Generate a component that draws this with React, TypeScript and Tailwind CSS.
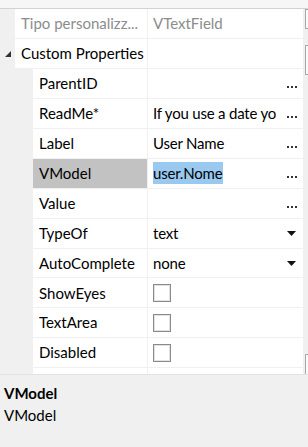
import React from 'react';

type Prop = {
  name: string;
  value?: string;
  kind: 'text' | 'dots' | 'select' | 'check' | 'none';
  selected?: boolean;
};

const props: Prop[] = [
  { name: 'ParentID', kind: 'dots' },
  { name: 'ReadMe*', value: 'If you use a date yo', kind: 'dots' },
  { name: 'Label', value: 'User Name', kind: 'dots' },
  { name: 'VModel', value: 'user.Nome', kind: 'dots', selected: true },
  { name: 'Value', kind: 'dots' },
  { name: 'TypeOf', value: 'text', kind: 'select' },
  { name: 'AutoComplete', value: 'none', kind: 'select' },
  { name: 'ShowEyes', kind: 'check' },
  { name: 'TextArea', kind: 'check' },
  { name: 'Disabled', kind: 'check' },
];

const Dots = () => (
  <div className="w-[10px] h-[30px] shrink-0 flex items-end justify-center pb-[10px] gap-[2px]">
    <div className="w-[2px] h-[2px] bg-[#333]" />
    <div className="w-[2px] h-[2px] bg-[#333]" />
    <div className="w-[2px] h-[2px] bg-[#333]" />
  </div>
);

const Arrow = () => (
  <svg width="9" height="5" viewBox="0 0 9 5" className="mr-[1px] shrink-0">
    <polygon points="0,0 9,0 4.5,5" fill="#111" />
  </svg>
);

const Check = () => (
  <div className="w-[18px] h-[18px] border border-[#8a8a8a] bg-white shadow-[inset_0_0_0_1px_#e2e2e2]" />
);

const Row = ({ p }: { p: Prop }) => (
  <div className="flex h-[30px]">
    <div className="w-[33px] shrink-0 bg-[#f0f0f0]" />
    <div className="flex flex-1 min-w-0 border-b border-[#f0f0f0] bg-white">
      <div className={`w-[115px] shrink-0 flex items-center pl-[6px] border-r border-[#f0f0f0] whitespace-nowrap ${p.selected ? 'bg-[#c2c2c2]' : ''}`}>
        {p.name}
      </div>
      <div className="flex-1 min-w-0 flex items-center gap-[4px] pl-[5px] pr-[6px]">
        <div className="flex-1 min-w-0 flex items-center overflow-hidden">
          {p.kind === 'check' ? (
            <Check />
          ) : (
            <span className={`whitespace-nowrap tracking-[-0.2px] ${p.selected ? 'bg-[#99c9ef] pr-[1px]' : ''}`}>
              {p.value ?? ''}
            </span>
          )}
        </div>
        {p.kind === 'dots' && <Dots />}
        {p.kind === 'select' && <Arrow />}
      </div>
    </div>
  </div>
);

const App: React.FC = () => {
  return (
    <div
      className="w-[308px] h-[447px] bg-[#f0f0f0] flex flex-col overflow-hidden text-[15px] text-black"
      style={{ fontFamily: 'Lato, "Noto Sans", sans-serif' }}
    >
      <div className="h-[9px] bg-[#f6f6f6] border-b border-[#d2d2d2]" />
      <div className="flex h-[366px] border-b border-[#e3e3e3]">
        <div className="w-[303px] shrink-0 flex flex-col overflow-hidden">
          {/* type header row */}
          <div className="flex h-[30px]">
            <div className="w-[15px] shrink-0 bg-[#f0f0f0]" />
            <div className="flex flex-1 min-w-0 border-b border-[#f0f0f0] bg-white text-[#8c8c8c]">
              <div className="w-[133px] shrink-0 flex items-center pl-[6px] border-r border-[#f0f0f0] whitespace-nowrap overflow-hidden">
                Tipo personalizz...
              </div>
              <div className="flex-1 flex items-center pl-[5px]">VTextField</div>
            </div>
          </div>
          {/* category */}
          <div className="flex h-[30px]">
            <div className="w-[15px] shrink-0 bg-[#f0f0f0] flex items-center justify-center pl-[1px]">
              <svg width="6" height="6" viewBox="0 0 6 6">
                <polygon points="6,0 6,6 0,6" fill="#333" />
              </svg>
            </div>
            <div className="flex flex-1 min-w-0 border-b border-[#f0f0f0] bg-white">
              <div className="w-[133px] shrink-0 flex items-center pl-[6px] border-r border-[#f0f0f0] whitespace-nowrap">
                Custom Properties
              </div>
              <div className="flex-1" />
            </div>
          </div>
          {props.map((p) => (
            <Row key={p.name} p={p} />
          ))}
          <div className="flex h-[6px]">
            <div className="w-[33px] shrink-0 bg-[#f0f0f0]" />
            <div className="flex flex-1 bg-white">
              <div className="w-[115px] shrink-0 border-r border-[#f0f0f0]" />
            </div>
          </div>
        </div>
        {/* scrollbar sliver */}
        <div className="flex-1 flex flex-col pl-[2px]">
          <div className="h-[20px] border border-r-0 border-[#a8a8a8] bg-[#fafafa]" />
          <div className="h-[16px]" />
          <div className="h-[30px] border border-r-0 border-[#a8a8a8] bg-[#fafafa]" />
          <div className="flex-1" />
          <div className="h-[20px] border border-r-0 border-b-0 border-[#a8a8a8] bg-[#fafafa]" />
        </div>
      </div>
      <div className="px-[4px] pt-[7px] leading-[22px]">
        <div className="font-bold">VModel</div>
        <div>VModel</div>
      </div>
    </div>
  );
};

export default App;
